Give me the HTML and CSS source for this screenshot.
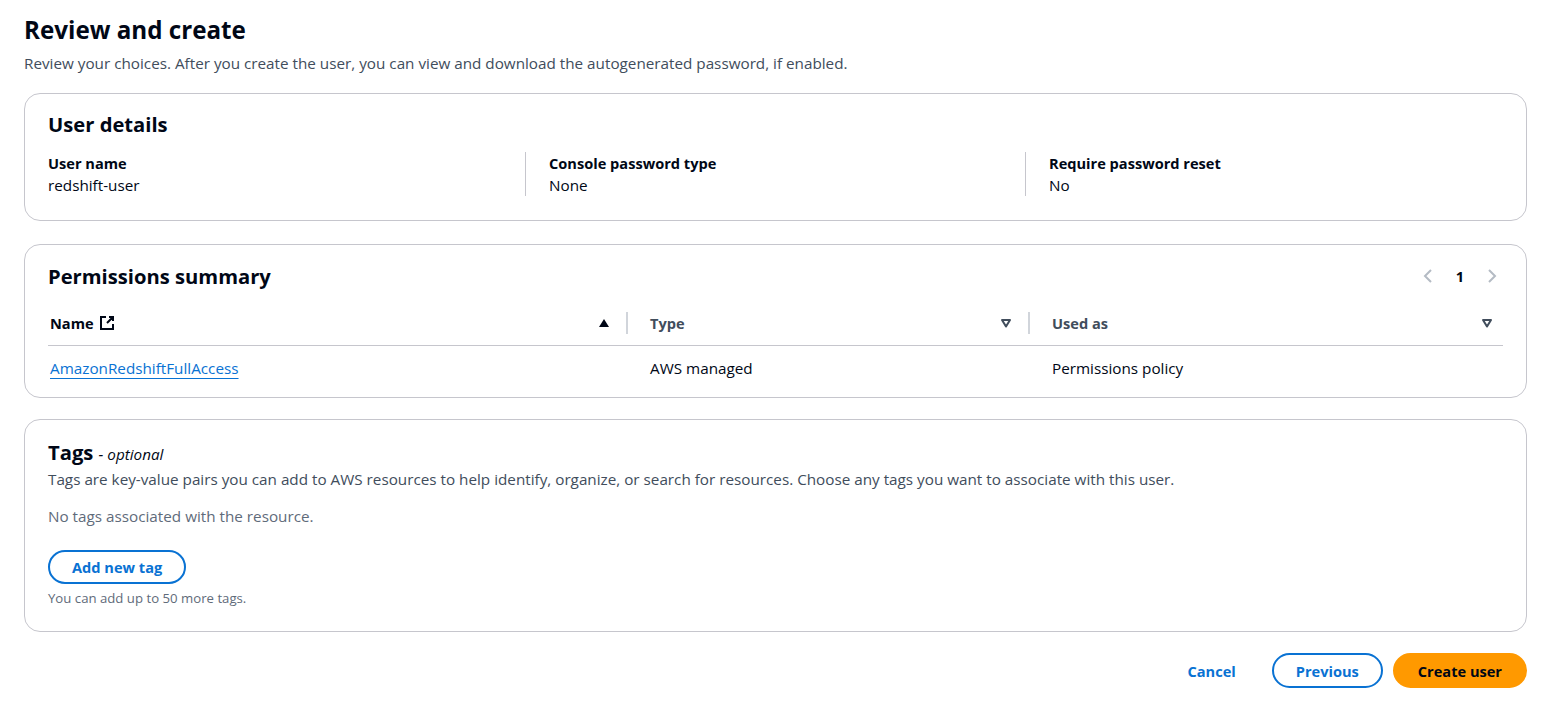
FILE: index.html
```html
<!DOCTYPE html>
<html>
<head>
<meta charset="utf-8">
<link rel="stylesheet" href="styles.css">
</head>
<body>
<div class="page">
  <header class="page-header">
    <h1>Review and create</h1>
    <p class="desc">Review your choices. After you create the user, you can view and download the autogenerated password, if enabled.</p>
  </header>

  <section class="card card-user">
    <h2>User details</h2>
    <div class="kv">
      <div class="kv-col">
        <div class="kv-label">User name</div>
        <div class="kv-value">redshift-user</div>
      </div>
      <div class="kv-col">
        <div class="kv-label">Console password type</div>
        <div class="kv-value">None</div>
      </div>
      <div class="kv-col">
        <div class="kv-label">Require password reset</div>
        <div class="kv-value">No</div>
      </div>
    </div>
  </section>

  <section class="card card-table">
    <div class="card-head">
      <h2>Permissions summary</h2>
      <div class="pager">
        <svg class="chev" width="16" height="16" viewBox="0 0 16 16"><path d="M11 2 5 8l6 6" fill="none" stroke="#b4bbc4" stroke-width="2"/></svg>
        <span class="page-num">1</span>
        <svg class="chev" width="16" height="16" viewBox="0 0 16 16"><path d="m5 2 6 6-6 6" fill="none" stroke="#b4bbc4" stroke-width="2"/></svg>
      </div>
    </div>
    <div class="table">
      <div class="thead">
        <div class="th th-first">
          <span class="th-label">Name
            <svg class="ext" width="16" height="16" viewBox="0 0 16 16"><path d="M14 9v5H2V2h5M10 2h4v4M14 2 8 8" fill="none" stroke="#000716" stroke-width="2"/></svg>
          </span>
          <svg class="sort" width="12" height="12" viewBox="0 0 12 12"><path d="M6 2 11 10H1z" fill="#000716"/></svg>
        </div>
        <div class="th">
          <span class="th-label">Type</span>
          <svg class="sort" width="12" height="12" viewBox="0 0 12 12"><path d="M2 3h8L6 9.5z" fill="none" stroke="#414d5c" stroke-width="2" stroke-linejoin="round"/></svg>
        </div>
        <div class="th th-last">
          <span class="th-label">Used as</span>
          <svg class="sort" width="12" height="12" viewBox="0 0 12 12"><path d="M2 3h8L6 9.5z" fill="none" stroke="#414d5c" stroke-width="2" stroke-linejoin="round"/></svg>
        </div>
      </div>
      <div class="trow">
        <div class="td td-first"><a href="#" class="link">AmazonRedshiftFullAccess</a></div>
        <div class="td">AWS managed</div>
        <div class="td">Permissions policy</div>
      </div>
    </div>
  </section>

  <section class="card card-tags">
    <h2>Tags <span class="optional">- optional</span></h2>
    <p class="tags-desc">Tags are key-value pairs you can add to AWS resources to help identify, organize, or search for resources. Choose any tags you want to associate with this user.</p>
    <p class="empty">No tags associated with the resource.</p>
    <button class="btn btn-normal btn-add">Add new tag</button>
    <p class="hint">You can add up to 50 more tags.</p>
  </section>

  <footer class="actions">
    <button class="btn btn-link">Cancel</button>
    <button class="btn btn-normal btn-prev">Previous</button>
    <button class="btn btn-primary">Create user</button>
  </footer>
</div>
</body>
</html>
```

FILE: styles.css
```css
* { box-sizing: border-box; }
html, body { margin: 0; padding: 0; background: #ffffff; }
body {
  font-family: "Open Sans", "Noto Sans", "Liberation Sans", sans-serif;
  color: #000716;
  font-size: 15.25px;
  line-height: 22px;
}
.page {
  padding: 13px 17px 0 24px;
}
h1 {
  margin: 0;
  font-size: 24.2px;
  line-height: 34px;
  font-weight: 700;
}
.desc {
  margin: 5px 0 0;
  color: #414d5c;
}
.card {
  border: 1px solid #c6c6cd;
  border-radius: 16px;
  padding: 15px 23px 23px;
}
.card-user { margin-top: 19px; padding-bottom: 24px; }
h2 {
  margin: 0;
  font-size: 20.2px;
  line-height: 30px;
  font-weight: 700;
}
.kv {
  display: grid;
  grid-template-columns: 477px 500px 1fr;
  margin-top: 13px;
}
.kv-col {
  padding: 0 20px 0 23px;
  border-left: 1px solid #c6c6cd;
}
.kv-col:first-child { border-left: none; padding-left: 0; }
.kv-label { font-weight: 700; font-size: 14.6px; }
.card-table { margin-top: 23px; padding-top: 16px; padding-bottom: 7px; }
.card-head {
  display: flex;
  justify-content: space-between;
  align-items: center;
}
.pager {
  display: flex;
  align-items: center;
  gap: 20px;
  margin-right: 3px;
}
.chev { display: block; }
.page-num { font-weight: 700; font-size: 14.6px; }
.table { margin-top: 10px; }
.thead {
  display: grid;
  grid-template-columns: 578px 402px 1fr;
  border-bottom: 1px solid #c6c6cd;
  height: 45px;
  align-items: center;
}
.th {
  display: flex;
  align-items: center;
  justify-content: space-between;
  font-weight: 700;
  font-size: 14.6px;
  padding: 0 16px 0 22px;
  height: 22px;
  border-left: 2px solid #d1d5db;
}
.th-first { border-left: none; padding-left: 2px; }
.th-last { padding-right: 10px; }
.th-label { display: flex; align-items: center; gap: 5px; color: #000716; }
.th:not(.th-first) .th-label { color: #414d5c; }
.ext { display: block; }
.trow {
  display: grid;
  grid-template-columns: 578px 402px 1fr;
  height: 44px;
  align-items: center;
}
.td { padding-left: 24px; }
.td-first { padding-left: 2px; }
.link {
  color: #0972d3;
  text-decoration: underline;
  text-underline-offset: 4px;
}
.card-tags { margin-top: 21px; padding-top: 18px; padding-bottom: 24px; }
.card-tags h2 { line-height: 28px; }
.optional {
  font-size: 15.25px;
  font-weight: 400;
  font-style: italic;
}
.tags-desc { margin: 0; color: #414d5c; }
.empty { margin: 15px 0 0; color: #5f6b7a; }
.btn {
  display: inline-flex;
  align-items: center;
  justify-content: center;
  font-family: inherit;
  font-size: 14.6px;
  font-weight: 700;
  line-height: 20px;
  border-radius: 20px;
  cursor: pointer;
  padding: 0 22px;
  border: 2px solid transparent;
  background: none;
}
.btn-normal {
  border-color: #0972d3;
  color: #0972d3;
  background: #ffffff;
}
.btn-add { margin-top: 23px; height: 34px; padding: 0 22px; }
.hint {
  margin: 5px 0 0;
  font-size: 13.2px;
  line-height: 18px;
  color: #5f6b7a;
}
.actions {
  display: flex;
  justify-content: flex-end;
  align-items: center;
  gap: 10px;
  margin-top: 21px;
}
.actions .btn { height: 35px; }
.btn-link { color: #0972d3; padding: 0 24px 0 20px; }
.btn-prev { padding: 0 22px; }
.btn-primary {
  background: #ff9900;
  border-color: #ff9900;
  color: #000716;
  padding: 0 23px;
}
```
